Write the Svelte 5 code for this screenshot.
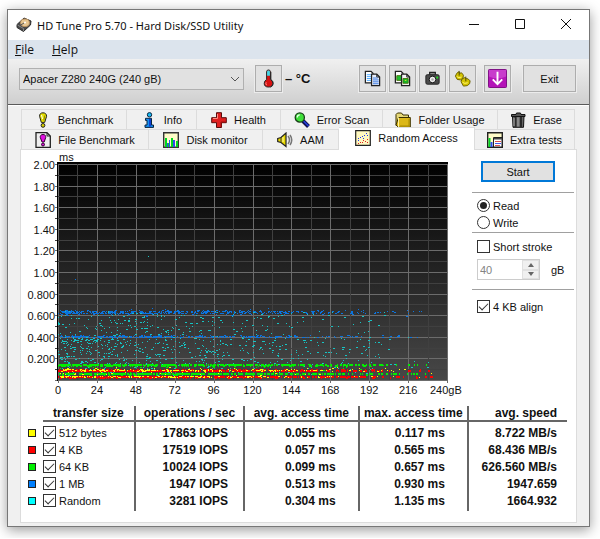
<script>
  let drive = 'Apacer Z280 240G (240 gB)';
  let mode = 'read';
  let shortStroke = false;
  let strokeSize = 40;
  let align = true;
  let active = 'random';

  const topTabs = [
    { id: 'benchmark', label: 'Benchmark' },
    { id: 'info', label: 'Info' },
    { id: 'health', label: 'Health' },
    { id: 'scan', label: 'Error Scan' },
    { id: 'folder', label: 'Folder Usage' },
    { id: 'erase', label: 'Erase' }
  ];

  const bottomTabs = [
    { id: 'file', label: 'File Benchmark' },
    { id: 'monitor', label: 'Disk monitor' },
    { id: 'aam', label: 'AAM' },
    { id: 'random', label: 'Random Access' },
    { id: 'extra', label: 'Extra tests' }
  ];

  let results = [
    { name: '512 bytes', color: 'yellow', on: true, iops: '17863 IOPS', avg: '0.055 ms', max: '0.117 ms', speed: '8.722 MB/s' },
    { name: '4 KB', color: 'red', on: true, iops: '17519 IOPS', avg: '0.057 ms', max: '0.565 ms', speed: '68.436 MB/s' },
    { name: '64 KB', color: 'green', on: true, iops: '10024 IOPS', avg: '0.099 ms', max: '0.657 ms', speed: '626.560 MB/s' },
    { name: '1 MB', color: 'blue', on: true, iops: '1947 IOPS', avg: '0.513 ms', max: '0.930 ms', speed: '1947.659' },
    { name: 'Random', color: 'cyan', on: true, iops: '3281 IOPS', avg: '0.304 ms', max: '1.135 ms', speed: '1664.932' }
  ];

  // plot area inside the chart svg
  const plot = { x: 37, y: 14, w: 389, h: 216 };
  const yLabels = ['2.00', '1.80', '1.60', '1.40', '1.20', '1.00', '0.800', '0.600', '0.400', '0.200'];
  const xLabels = [0, 24, 48, 72, 96, 120, 144, 168, 192, 216];
  const steps = Array.from({ length: 21 }, (_, i) => i);

  const px = (gb) => plot.x + (gb / 240) * plot.w;
  const py = (ms) => plot.y + plot.h - (ms / 2) * plot.h;

  let seed = 4711;
  function rnd() {
    seed = (seed * 1664525 + 1013904223) % 4294967296;
    return seed / 4294967296;
  }

  // samples thin out towards the end of the disk
  function band(count, low, high, height = 1) {
    let d = '';
    for (let i = 0; i < count; i++) {
      const x = Math.round(px(240 * (1 - Math.sqrt(1 - rnd()))));
      const y = Math.round(py(low + rnd() * (high - low)));
      const w = rnd() < 0.35 ? 2 : 1;
      d += `M${x} ${y}h${w}v${height}h-${w}z`;
    }
    return d;
  }

  const series = [
    { color: 'cyan', d: band(500, 0.14, 0.4) + band(240, 0.4, 0.64) + band(120, 0.04, 0.15) },
    { color: 'blue', d: band(420, 0.615, 0.645) + band(340, 0.398, 0.415) + band(40, 0.59, 0.67) },
    { color: 'green', d: band(400, 0.142, 0.148, 2) + band(380, 0.06, 0.064, 2) + band(70, 0.06, 0.15) },
    { color: 'red', d: band(480, 0.09, 0.1, 2) + band(480, 0.032, 0.036, 2) },
    { color: 'yellow', d: band(190, 0.086, 0.1) + band(150, 0.03, 0.036) + band(60, 0.05, 0.12) }
  ];
</script>

{#snippet tabIcon(id)}
  <svg class="tab-icon" viewBox="0 0 16 16" aria-hidden="true">
    {#if id === 'benchmark'}
      <path d="M8 .8C5.700 .8 4.400 2.200 4.600 4.300L6.300 10.400H9.700L11.600 4.300C11.600 2.200 10.300 .8 8 .8z" fill="#e6e000" stroke="#222" />
      <circle cx="8" cy="13.400" r="1.900" fill="#d8d000" stroke="#222" />
      <path d="M6.500 3l1 4" stroke="#fff" />
      <path d="M9.800 3.500l-1 5" stroke="#8a8600" />
    {:else if id === 'info'}
      <circle cx="8.500" cy="2.800" r="2.200" fill="#17b9f2" stroke="#0b2440" />
      <path d="M4.500 6.300H10.500V13H12.500V15.400H4V13H6V8.400H4.500z" fill="#1590f0" stroke="#0b2440" />
      <path d="M9 7v7.500" stroke="#0b3fd0" stroke-width="2" />
    {:else if id === 'health'}
      <path d="M5.500 .7h5v5h4.800v5h-4.800v4.800h-5v-4.800H.7v-5h4.800z" fill="#e02020" stroke="#5a0c0c" />
      <path d="M6.500 2v4.500H2" stroke="#ff8a80" fill="none" />
      <path d="M14.500 10H10v5" stroke="#a01010" fill="none" />
    {:else if id === 'scan'}
      <path d="M9 9l5.500 5.500" stroke="#101050" stroke-width="4" />
      <path d="M9.500 9l5 5" stroke="#2440e0" stroke-width="1.500" />
      <circle cx="5.800" cy="5.500" r="4.600" fill="#3fe03a" stroke="#173f17" stroke-width="1.300" />
      <path d="M3.300 5.500a2.600 2.600 0 0 1 2.500-2.600" stroke="#e8ffe8" fill="none" stroke-width="1.300" />
    {:else if id === 'folder'}
      <path d="M1 13.500V2.500L2.500 1H6.500L8 3H13.500V6" fill="#e6d878" stroke="#3a3000" />
      <path d="M3.500 5.500H15.300V15.300H3.500L1 13z" fill="#dcb818" stroke="#3a3000" />
      <path d="M3.500 5.500V15" stroke="#fff2a0" />
      <path d="M14 7v7H5" stroke="#a88a00" fill="none" />
    {:else if id === 'erase'}
      <path d="M2.500 4H14L13.500 15.300H3z" fill="#666" stroke="#111" />
      <path d="M1.500 2.500H6L6.500 1H10.500L11 2.500H15V4.500H1.500z" fill="#555" stroke="#111" />
      <path d="M5.500 5v10M11 5v10" stroke="#2a2a2a" stroke-width="2" />
      <path d="M8 5.500v9M4 6v8" stroke="#aaa" />
    {:else if id === 'file'}
      <path d="M1 .7H12L15.300 4V15.300H1z" fill="#eee" stroke="#222" stroke-width="1.300" />
      <path d="M12 1v3h3" fill="none" stroke="#222" />
      <path d="M8 2.500C5.800 2.500 5 4 5.300 5.500L7 10H9.200L10.700 5.500C11 4 10.200 2.500 8 2.500z" fill="#e010e0" stroke="#300030" />
      <circle cx="8" cy="12.500" r="1.500" fill="#d010d0" stroke="#300030" />
    {:else if id === 'monitor'}
      <path d="M.7 .7H15.300V15.300H.7z" fill="#fffcc8" stroke="#333" stroke-width="1.400" />
      <path d="M2 6h2v9H2zM5 11h2v4H5zM8 6h2v9H8zM13 9h2v6h-2z" fill="#00d820" />
      <path d="M4 11h1v4H4zM6 8h1v7H6zM10 8h2v7h-2z" fill="#3048f0" />
    {:else if id === 'aam'}
      <path d="M.7 6.500L4 5.500L9 1V14.500L4 10.500L.7 9.500z" fill="#e8d800" stroke="#222" stroke-width="1.200" />
      <path d="M4 5.500v5" stroke="#333" />
      <path d="M6 5v5" stroke="#fffbb0" />
      <path d="M11 4q3 4 0 8M13 3q3.500 5 0 10" stroke="#777" fill="none" stroke-width="1.500" />
    {:else if id === 'random'}
      <path d="M.7 .7H15.300V15.300H.7z" fill="#fff8c0" stroke="#222" stroke-width="1.200" />
      <path d="M3 8h1v1H3zM5 7h1v1H5zM7 6h1v1H7zM8 8h1v1H8zM9 5h1v1H9zM11 3h1v1h-1zM12 5h1v1h-1zM3 10h1v1H3z" fill="#2038f0" />
      <path d="M3 13h1v1H3zM5 12h1v1H5zM7 12h1v1H7zM8 10h1v1H8zM10 11h1v1h-1zM12 9h1v1h-1zM12 12h1v1h-1z" fill="#e02020" />
    {:else if id === 'extra'}
      <path d="M.7 .7H15.300V15.300H.7z" fill="#fffcc8" stroke="#222" stroke-width="1.400" />
      <path d="M1.500 6h2v9h-2z" fill="#00d820" />
      <path d="M3.500 10h2v5h-2z" fill="#3048f0" />
      <path d="M6.500 5.500H15V15H6.500z" fill="#fff" stroke="#222" />
      <path d="M7 6h8v1.500H7z" fill="#444" />
      <path d="M8 9.500h6M8 13.500h5" stroke="#e05050" />
      <path d="M8 11.500h6" stroke="#4058f0" />
    {/if}
  </svg>
{/snippet}

{#snippet tab(t)}
  <button class="tab" class:active={active === t.id} role="tab" aria-selected={active === t.id} on:click={() => (active = t.id)}>
    {@render tabIcon(t.id)}
    <span>{t.label}</span>
  </button>
{/snippet}

<div class="window">
  <header class="title-bar">
    <svg class="app-icon" viewBox="0 0 16 16" aria-hidden="true">
      <path d="M1 7.500L8 1L15 4L14.500 8L7.500 14.500L1 10.500z" fill="#4a4a4a" stroke="#2c2c2c" />
      <path d="M1.500 8L7.500 11.500V14" fill="none" stroke="#888" />
      <ellipse cx="9" cy="5.800" rx="4.400" ry="3.800" fill="#e8c690" stroke="#b89060" />
      <circle cx="9" cy="5.500" r="1" fill="#fff" />
      <path d="M4 8.500l4-2.500" stroke="#555" />
    </svg>
    <h1>HD Tune Pro 5.70 - Hard Disk/SSD Utility</h1>
    <div class="window-buttons">
      <button aria-label="Minimize">
        <svg viewBox="0 0 12 12"><path d="M1 6.500h10" /></svg>
      </button>
      <button aria-label="Maximize">
        <svg viewBox="0 0 12 12"><path d="M1.500 1.500h9v9h-9z" /></svg>
      </button>
      <button aria-label="Close">
        <svg viewBox="0 0 12 12"><path d="M1 1l10 10M11 1L1 11" /></svg>
      </button>
    </div>
  </header>

  <nav class="menu">
    <button><u>F</u>ile</button>
    <button><u>H</u>elp</button>
  </nav>

  <div class="toolbar">
    <div class="drive">
      <select bind:value={drive} aria-label="Drive">
        <option>Apacer Z280 240G (240 gB)</option>
      </select>
      <svg viewBox="0 0 10 6" aria-hidden="true"><path d="M1 1l4 4l4-4" /></svg>
    </div>

    <button class="tool" aria-label="Temperature">
      <svg viewBox="0 0 20 20">
        <path d="M8 3q0-2 2-2t2 2v8q2.500 1.500 2.500 4q0 4-4.500 4t-4.500-4q0-2.500 2.500-4z" fill="#d81010" stroke="#222" />
        <path d="M8.500 3q0-1.500 1.500-1.500T11.500 3v4h-3z" fill="#40d8e8" />
        <path d="M12.500 3v8q2.500 1.500 2.500 4q0 3-3 4" fill="none" stroke="#222" />
        <path d="M7.500 14q-.8 1.500 .5 3" stroke="#ff9a90" fill="none" />
      </svg>
    </button>
    <span class="temp">– °C</span>

    <div class="tools">
      <button class="tool" aria-label="Copy text">
        <svg viewBox="0 0 20 20">
          <path d="M2.500 2.500h6l2 2v10h-8z" fill="#fff" stroke="#222" stroke-width="1.300" />
          <path d="M4 6h5M4 8h5M4 10h5M4 12h5" stroke="#4aa8ff" />
          <path d="M9 5.500h5.500l3 3V17.500H9z" fill="#e6ecf8" stroke="#222" stroke-width="1.300" />
          <path d="M14.500 5.500v3h3" fill="none" stroke="#222" />
          <path d="M10.500 9.500h5M10.500 11.500h6M10.500 13.500h6M10.500 15.500h6" stroke="#3878e0" />
        </svg>
      </button>
      <button class="tool" aria-label="Copy screenshot">
        <svg viewBox="0 0 20 20">
          <path d="M2.500 2.500h6l2 2v10h-8z" fill="#fff" stroke="#222" stroke-width="1.300" />
          <path d="M4 7h5v5H4z" fill="#20c030" stroke="#4a7810" />
          <path d="M9 5.500h5.500l3 3V17.500H9z" fill="#f2f2f2" stroke="#222" stroke-width="1.300" />
          <path d="M14.500 5.500v3h3" fill="none" stroke="#222" />
          <path d="M10.500 10h5.500v5h-5.500z" fill="#10b828" stroke="#4a7810" />
          <path d="M12 12l2-1v2z" fill="#e8e020" />
        </svg>
      </button>
      <button class="tool" aria-label="Save screenshot">
        <svg viewBox="0 0 20 20">
          <path d="M7 6V3.500h6V6" fill="#888" stroke="#222" stroke-width="1.300" />
          <rect x="3" y="6" width="14" height="10" rx="1.500" fill="#4a4a4a" stroke="#222" />
          <circle cx="10" cy="11" r="3.500" fill="#eee" stroke="#111" />
          <circle cx="10" cy="11" r="1.300" fill="#aaa" />
          <path d="M14 8h2v2h-2z" fill="#20e020" />
        </svg>
      </button>
      <button class="tool" aria-label="Options">
        <svg viewBox="0 0 20 20">
          <g fill="#d4c400" stroke="#6a6000">
            <path d="M2.500 7.500l1.500-3l2-1.500l1 1.500l2-.5l2 2.500l-.5 3l-2.500 2l-3.500-.5z" />
            <path d="M8.500 13.500l1-3l3-1.500l1.500 1l2 .5l2 2l-.5 3l-2.500 2l-4 .5z" />
          </g>
          <path d="M6.500 2v5M13.500 8v5" stroke="#4a4400" />
          <path d="M4 8q2 2 5 .5M10 14q2 2 5.500 .5" stroke="#fff470" fill="none" />
        </svg>
      </button>
      <button class="tool save" aria-label="Minimize to tray">
        <svg viewBox="0 0 20 20">
          <rect x=".5" y=".5" width="19" height="19" rx="1" fill="#b414b8" stroke="#7a0a80" />
          <path d="M1 1h18v7q-9 4-18 0z" fill="#c83ccc" />
          <path d="M10 3v13M5 11l5 5l5-5" fill="none" stroke="#fff" stroke-width="2" />
        </svg>
      </button>
      <button class="exit">Exit</button>
    </div>
  </div>

  <main>
    <div class="tabs" role="tablist">
      <div class="tab-row top">
        {#each topTabs as t}
          {@render tab(t)}
        {/each}
      </div>
      <div class="tab-row bottom">
        {#each bottomTabs as t}
          {@render tab(t)}
        {/each}
      </div>
    </div>

    <section class="panel">
      <div class="upper">
        <svg class="chart" viewBox="0 0 451 248" role="img" aria-label="Access time">
          <defs>
            <linearGradient id="plot-bg" x1="0" y1="0" x2="0" y2="1">
              <stop offset="0" stop-color="#000" />
              <stop offset="1" stop-color="#484848" />
            </linearGradient>
          </defs>
          <rect x="36" y="12" width="391" height="219" fill="url(#plot-bg)" />

          <g shape-rendering="crispEdges">
            {#each steps as i}
              <path class={i % 2 ? 'minor' : 'major'} d="M{Math.round(plot.x + (i * plot.w) / 20)}.5 {plot.y}v{plot.h + (i % 2 ? 1 : 3)}" />
              <path class={i % 2 ? 'minor' : 'major'} d="M{plot.x - 3} {Math.round(plot.y + (i * plot.h) / 20)}.5h{plot.w + 3}" />
            {/each}
            <path class="edge" d="M36.500 12v219" />
            {#each series as s}
              <path class="dots {s.color}" d={s.d} />
            {/each}
            <path class="dots cyan" d="M127 106h1v1h-1z" />
            <path class="dots blue" d="M54 129h1v1h-1z" />
          </g>

          <text x="38" y="11">ms</text>
          {#each yLabels as label, i}
            <text class="end" x="34" y={19 + Math.round((i * plot.h) / 10)}>{label}</text>
          {/each}
          {#each xLabels as label}
            <text class="middle" x={px(label)} y="244">{label}</text>
          {/each}
          <text x="409" y="244">240gB</text>
        </svg>

        <aside>
          <button class="start">Start</button>
          <div class="group">
            <label><input type="radio" name="mode" value="read" bind:group={mode} />Read</label>
            <label><input type="radio" name="mode" value="write" bind:group={mode} />Write</label>
          </div>
          <div class="group stroke">
            <label><input type="checkbox" bind:checked={shortStroke} />Short stroke</label>
            <div class="size">
              <div class="spinner">
                <input id="stroke-size" type="number" bind:value={strokeSize} disabled={!shortStroke} />
                <div class="arrows">
                  <button aria-label="Increase" disabled={!shortStroke} on:click={() => strokeSize++}>
                    <svg viewBox="0 0 6 4"><path d="M0 4l3-4l3 4z" /></svg>
                  </button>
                  <button aria-label="Decrease" disabled={!shortStroke} on:click={() => strokeSize--}>
                    <svg viewBox="0 0 6 4"><path d="M0 0l3 4l3-4z" /></svg>
                  </button>
                </div>
              </div>
              <label for="stroke-size">gB</label>
            </div>
          </div>
          <div class="group align">
            <label><input type="checkbox" bind:checked={align} />4 KB align</label>
          </div>
        </aside>
      </div>

      <table>
        <colgroup>
          <col class="c-swatch" /><col class="c-size" /><col class="c-iops" /><col class="c-avg" /><col class="c-max" /><col class="c-speed" />
        </colgroup>
        <thead>
          <tr>
            <td></td>
            <th>transfer size</th>
            <th>operations / sec</th>
            <th>avg. access time</th>
            <th>max. access time</th>
            <th class="speed">avg. speed</th>
          </tr>
        </thead>
        <tbody>
          {#each results as r}
            <tr>
              <td><span class="swatch {r.color}"></span></td>
              <td class="name"><label><input type="checkbox" bind:checked={r.on} />{r.name}</label></td>
              <td class="iops">{r.iops}</td>
              <td class="time">{r.avg}</td>
              <td class="time">{r.max}</td>
              <td class="speed">{r.speed}</td>
            </tr>
          {/each}
        </tbody>
      </table>
    </section>
  </main>
</div>

<style>
  :global(body) {
    margin: 0;
    background: #fff;
  }

  .window {
    margin: 9px 10px 11px 7px;
    border: 1px solid #777;
    background: #f0f0f0;
    box-shadow: 0 3px 12px rgba(0, 0, 0, 0.4);
    font-family: "Liberation Sans", Arial, sans-serif;
    font-size: 11px;
    color: #111;
  }

  button,
  select,
  input {
    font: inherit;
    color: inherit;
    margin: 0;
    padding: 0;
    box-sizing: border-box;
  }

  .title-bar {
    display: flex;
    align-items: center;
    height: 30px;
    padding-left: 8px;
    background: #fff;
  }

  .app-icon {
    width: 16px;
    height: 16px;
  }

  h1 {
    margin: 0 auto 0 5px;
    font-family: "Noto Sans", "Segoe UI", sans-serif;
    font-size: 11px;
    font-weight: 400;
    white-space: nowrap;
  }

  .window-buttons {
    display: flex;
  }

  .window-buttons button {
    width: 46px;
    height: 30px;
    border: none;
    background: none;
  }

  .window-buttons svg {
    width: 12px;
    height: 12px;
    fill: none;
    stroke: #111;
  }

  .menu {
    display: flex;
    gap: 18px;
    height: 19px;
    padding-left: 7px;
    background: #dce4ed;
  }

  .menu button {
    border: none;
    background: none;
    font-family: "Open Sans", "Segoe UI", sans-serif;
    font-size: 12px;
    line-height: 19px;
  }

  .toolbar {
    display: flex;
    align-items: center;
    height: 46px;
    box-sizing: border-box;
    padding: 0 13px 6px 11px;
    background: linear-gradient(#f0f0f0, #cfcfcf);
    border-bottom: 1px solid #5a5a5a;
  }

  .drive {
    position: relative;
    flex: 0 1 225px;
    margin-right: 11px;
  }

  .drive select {
    display: block;
    width: 100%;
    height: 22px;
    padding-left: 3px;
    border: 1px solid #b0b0b0;
    border-radius: 0;
    background: #e1e1e1;
    appearance: none;
  }

  .drive svg {
    position: absolute;
    right: 4px;
    top: 8px;
    width: 10px;
    height: 6px;
    fill: none;
    stroke: #555;
    pointer-events: none;
  }

  .tool,
  .exit {
    display: flex;
    align-items: center;
    justify-content: center;
    width: 27px;
    height: 27px;
    border: 1px solid #adadad;
    background: #e1e1e1;
    box-shadow: 0 0 0 1px #ececec;
  }

  .tool svg {
    width: 19px;
    height: 19px;
  }

  .exit {
    width: 53px;
    margin-left: 9px;
  }

  .temp {
    margin-left: 3px;
    font-weight: 700;
    font-size: 13px;
  }

  .tools {
    display: flex;
    gap: 3px;
    margin-left: auto;
  }

  .save {
    margin-left: 5px;
  }

  main {
    padding: 3px 12px 3px;
    border-top: 1px solid #fff;
  }

  .tabs {
    margin: 0 2px 0 1px;
  }

  .tab-row {
    display: grid;
    height: 20px;
  }

  .top {
    grid-template-columns: 106fr 70fr 84fr 102fr 115fr 77fr;
  }

  .bottom {
    grid-template-columns: 128fr 114fr 76fr 136fr 100fr;
  }

  .tab {
    display: flex;
    align-items: center;
    justify-content: center;
    gap: 7px;
    border: 1px solid #dcdcdc;
    border-width: 1px 1px 0 0;
    background: #f0f0f0;
    white-space: nowrap;
  }

  .tab:first-child {
    border-left-width: 1px;
  }

  .tab.active {
    position: relative;
    z-index: 1;
    margin: -2px 0 -1px;
    padding-bottom: 3px;
    background: #fff;
  }

  .tab-icon {
    flex: none;
    width: 16px;
    height: 16px;
    fill: none;
  }

  .panel {
    border: 1px solid #dcdcdc;
    background: #fff;
    padding-bottom: 11px;
  }

  .upper {
    display: grid;
    grid-template-columns: 1fr 102px;
    padding-right: 2px;
  }

  .chart {
    display: block;
    width: 100%;
  }

  .chart text {
    font-size: 11px;
    fill: #111;
  }

  .chart .end {
    text-anchor: end;
  }

  .chart .middle {
    text-anchor: middle;
  }

  .major {
    stroke: #6c6c6c;
  }

  .minor {
    stroke: #404040;
  }

  .edge {
    stroke: #000;
  }

  .dots.yellow {
    fill: #ffff00;
  }

  .dots.red {
    fill: #ff0000;
  }

  .dots.green {
    fill: #00f000;
  }

  .dots.blue {
    fill: #0a74e0;
  }

  .dots.cyan {
    fill: #16c4c4;
  }

  aside {
    padding-top: 11px;
  }

  .start {
    display: block;
    width: 74px;
    height: 21px;
    margin: 0 0 10px 9px;
    border: 2px solid #0078d7;
    background: #e1e1e1;
  }

  .group {
    border-top: 1px solid #a0a0a0;
    padding: 4px 0 1px 5px;
  }

  .group label {
    display: flex;
    align-items: center;
    gap: 3px;
    height: 17px;
  }

  .stroke {
    padding: 5px 0 9px 5px;
  }

  .align {
    padding-top: 8px;
  }

  input[type='checkbox'],
  input[type='radio'] {
    flex: none;
    display: grid;
    place-items: center;
    width: 13px;
    height: 13px;
    border: 1px solid #333;
    background: #fff;
    appearance: none;
  }

  input[type='radio'] {
    border-radius: 50%;
  }

  input[type='radio']:checked::before {
    content: '';
    width: 7px;
    height: 7px;
    border-radius: 50%;
    background: #222;
  }

  input[type='checkbox']:checked::before {
    content: '';
    width: 9px;
    height: 5px;
    margin-bottom: 3px;
    border: solid #333;
    border-width: 0 0 1px 1px;
    box-sizing: border-box;
    transform: rotate(-45deg);
  }

  .size {
    display: flex;
    align-items: center;
    gap: 11px;
    margin-top: 4px;
  }

  .spinner {
    display: flex;
    width: 63px;
    height: 21px;
    box-sizing: border-box;
    border: 1px solid #ccc;
  }

  .spinner input {
    flex: 1;
    min-width: 0;
    padding-left: 2px;
    border: none;
    background: #fff;
    color: #838383;
    appearance: textfield;
  }

  .arrows {
    display: flex;
    flex-direction: column;
    width: 17px;
  }

  .arrows button {
    display: flex;
    align-items: center;
    justify-content: center;
    flex: 1;
    border: 1px solid #e0e0e0;
    background: #f0f0f0;
  }

  .arrows svg {
    width: 6px;
    height: 4px;
    fill: #666;
  }

  table {
    width: calc(100% - 9px);
    margin-top: 8px;
    table-layout: fixed;
    border-spacing: 0;
    font-size: 12px;
    font-weight: 700;
    line-height: 14px;
  }

  .c-swatch {
    width: 22px;
  }

  .c-size {
    width: 17%;
  }

  .c-iops,
  .c-max {
    width: 20%;
  }

  .c-avg {
    width: 21%;
  }

  th,
  td {
    padding: 0;
    white-space: nowrap;
  }

  th {
    border-bottom: 2px solid #666;
  }

  th:not(:last-child),
  tbody td:not(:first-child, :last-child) {
    border-right: 2px solid #666;
  }

  tbody td {
    height: 17px;
    text-align: right;
  }

  tbody tr:first-child td {
    padding-top: 2px;
  }

  tbody tr:last-child td {
    padding-bottom: 2px;
  }

  .swatch {
    display: block;
    width: 8px;
    height: 8px;
    margin-left: 7px;
    box-sizing: border-box;
    border: 1px solid #222;
  }

  .swatch.yellow {
    background: #ffff00;
  }

  .swatch.red {
    background: #ff0000;
  }

  .swatch.green {
    background: #00f000;
  }

  .swatch.blue {
    background: #0080ff;
  }

  .swatch.cyan {
    background: #00ffff;
  }

  .name label {
    display: flex;
    align-items: center;
    gap: 3px;
    font-size: 11px;
    font-weight: 400;
  }

  td.iops {
    padding-right: 15px;
  }

  td.time {
    padding-right: 22px;
  }

  th.speed,
  td.speed {
    padding-right: 10px;
    text-align: right;
  }
</style>
